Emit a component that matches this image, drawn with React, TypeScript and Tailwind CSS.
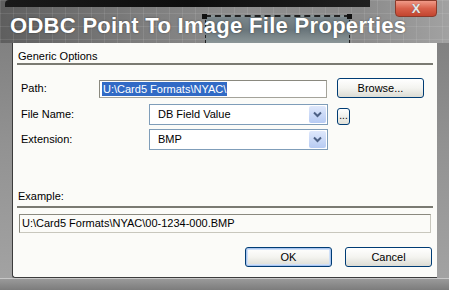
import React from "react";

const UI_FONT = "font-['Liberation_Sans',Arial,sans-serif]";

function XPButton({
  label,
  width,
  isDefault = false,
}: {
  label: string;
  width: string;
  isDefault?: boolean;
}) {
  return (
    <button
      type="button"
      className={`${width} h-[20px] rounded-[3px] border border-[#003c74] bg-gradient-to-b from-[#ffffff] via-[#f4f4f0] to-[#dcdcd4] text-[11px] text-black leading-none flex items-center justify-center ${
        isDefault ? "shadow-[inset_0_0_0_1px_#a8c4ee,inset_0_0_0_2px_#cfe0f8]" : ""
      }`}
    >
      {label}
    </button>
  );
}

function Combo({ value }: { value: string }) {
  return (
    <div className="w-[179px] h-[21px] border border-[#7f9db9] bg-white flex items-stretch">
      <div className="flex-1 pl-[8px] text-[11px] flex items-center text-black">{value}</div>
      <div className="w-[17px] m-px rounded-[2px] bg-gradient-to-b from-[#dfe8fb] to-[#b7cbf3] flex items-center justify-center">
        <svg width="9" height="7" viewBox="0 0 9 7">
          <path d="M1 1.5 L4.5 5 L8 1.5" fill="none" stroke="#4d6185" strokeWidth="2" />
        </svg>
      </div>
    </div>
  );
}

export default function App() {
  return (
    <div
      className={`w-[449px] h-[290px] overflow-hidden flex flex-col bg-gradient-to-b from-[#7a7a7a] via-[#929292] to-[#a4a4a4] ${UI_FONT}`}
    >
      {/* Title bar */}
      <div className="relative h-[43px] shrink-0 bg-[linear-gradient(90deg,rgba(255,255,255,0.09)_1px,transparent_1px),linear-gradient(rgba(255,255,255,0.09)_1px,transparent_1px),linear-gradient(90deg,#5e5e5e,#7c7c7c_30%,#8e8e8e_55%,#8a8a8a_80%,#a2a2a2)] bg-[size:13px_13px,13px_13px,100%_100%]">
        <div className="absolute left-[5px] top-0 w-[365px] h-[7px] bg-gradient-to-r from-[#1a1a1a] via-[#0e0e0e] to-[#202020] rounded-tl-[4px]" />
        <div className="absolute left-[205px] top-[15px] w-[145px] h-[28px] border-t-2 border-l border-r border-dashed border-[#222] bg-gradient-to-b from-[#7b878c] via-[#6a767b] to-[#8c9698]" />
        <div className="absolute left-[202px] top-[14px] w-[5px] h-[5px] bg-[#111]" />
        <div className="absolute left-[347px] top-[14px] w-[5px] h-[5px] bg-[#111]" />
        <div className="absolute left-[395px] top-0 w-[42px] h-[17px] rounded-b-[4px] border border-[#8a3a2a] bg-gradient-to-b from-[#f09a88] via-[#d8604a] to-[#c2452f] flex items-center justify-center">
          <span className="text-[13px] font-bold text-[#e8e8e8] leading-none [text-shadow:0_0_1px_#555]">X</span>
        </div>
        <div className="relative pl-[10px] pt-[15px] text-[22px] font-bold text-white leading-none tracking-[0.3px] [text-shadow:0_0_2px_rgba(0,0,0,0.5)]">
          ODBC Point To Image File Properties
        </div>
      </div>

      {/* Dialog body */}
      <div className="flex px-[12px] h-[235px] shrink-0">
        <div className="w-[425px] h-full bg-[#fbfbf8] border-l border-b border-[#3c3c3c] rounded-bl-[3px] flex flex-col text-[11px] text-black">
          <div className="pl-[5px] pt-[6px] h-[20px] leading-[14px]">Generic Options</div>
          <div className="mx-[4px] h-[2px] bg-[#7a7a72]" />

          {/* Path row */}
          <div className="mt-[14px] flex items-center">
            <div className="w-[86px] pl-[8px]">Path:</div>
            <div className="w-[228px] h-[18px] border border-[#a4a39a] border-t-[#8a897f] border-l-[#8a897f] bg-white flex items-center pl-[2px]">
              <span className="bg-[#316ac5] text-white px-[1px] leading-[14px]">U:\Card5 Formats\NYAC\</span>
            </div>
            <div className="ml-[10px] -mt-[1px]">
              <XPButton label="Browse..." width="w-[87px]" />
            </div>
          </div>

          {/* File name row */}
          <div className="mt-[6px] flex items-center">
            <div className="w-[136px] pl-[8px]">File Name:</div>
            <Combo value="DB Field Value" />
            <button
              type="button"
              className="ml-[9px] mt-[4px] w-[13px] h-[17px] rounded-[3px] border border-[#003c74] bg-gradient-to-b from-white to-[#e0e0d8] text-[10px] leading-none flex items-end justify-center pb-[3px]"
            >
              ...
            </button>
          </div>

          {/* Extension row */}
          <div className="mt-[4px] flex items-center">
            <div className="w-[136px] pl-[8px]">Extension:</div>
            <Combo value="BMP" />
          </div>

          <div className="mt-[39px] pl-[5px] h-[17px] leading-[14px]">Example:</div>
          <div className="mx-[4px] h-[2px] bg-[#7a7a72]" />
          <div className="mt-[6px] mx-[6px] h-[19px] border border-[#c8c7bd] border-t-[#8a897f] border-l-[#8a897f] bg-[#fbfbf8] flex items-center pl-[2px]">
            U:\Card5 Formats\NYAC\00-1234-000.BMP
          </div>

          <div className="mt-[14px] flex justify-end gap-[13px] pr-[5px]">
            <XPButton label="OK" width="w-[87px]" isDefault />
            <XPButton label="Cancel" width="w-[87px]" />
          </div>
        </div>
      </div>
      <div className="flex-1 border-t border-[#c8c8c8] bg-gradient-to-b from-[#9a9a9a] to-[#7c7c7c]" />
    </div>
  );
}
